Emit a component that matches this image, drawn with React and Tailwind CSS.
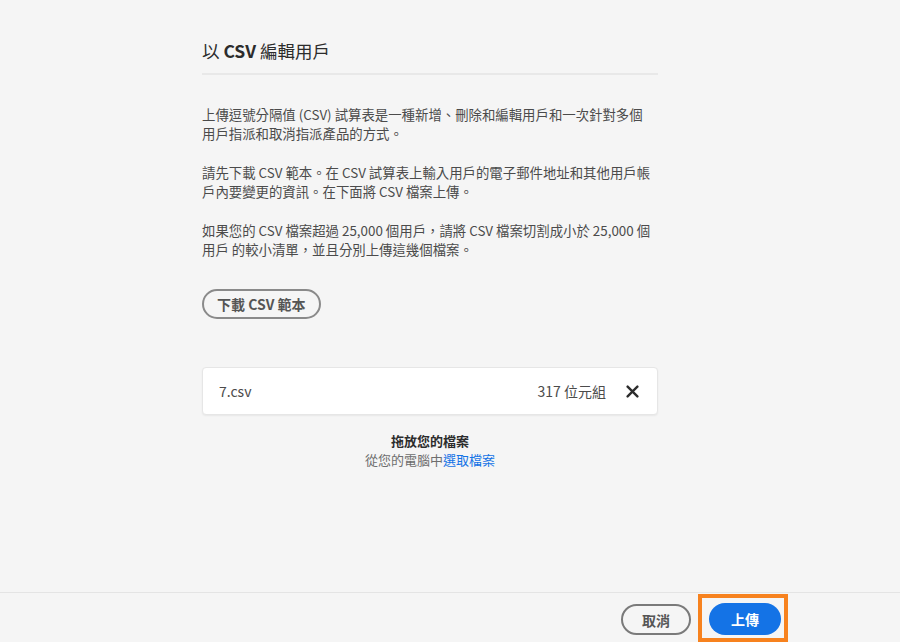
import React from 'react';

const font = { fontFamily: '"Noto Sans CJK TC", "Open Sans", sans-serif' };

const CloseIcon = () => (
  <svg width="13" height="13" viewBox="0 0 12 12" fill="none" stroke="#2c2c2c" strokeWidth="2.2" strokeLinecap="round">
    <path d="M1.5 1.5l9 9M10.5 1.5l-9 9" />
  </svg>
);

export default function App() {
  return (
    <div
      className="h-[642px] w-[900px] flex flex-col bg-[#f5f5f5] text-[#4b4b4b] font-['Noto_Sans_CJK_TC',_sans-serif]"
      style={font}
    >
      {/* Body */}
      <div className="flex-1 pl-[202px]">
        <div className="w-[456px]">
          <h2 className="pt-[39px] pb-[10px] text-[17.5px] leading-[24px] text-[#2c2c2c]">
            以 <span className="font-bold">CSV</span> 編輯用戶
          </h2>
          <div className="h-[2px] bg-[#e8e8e8]" />

          <div className="mt-[30px] space-y-[20px] text-[13.4px] leading-[19px] whitespace-nowrap">
            <p>
              上傳逗號分隔值 (CSV) 試算表是一種新增、刪除和編輯用戶和一次針對多個
              <br />
              用戶指派和取消指派產品的方式。
            </p>
            <p>
              請先下載 CSV 範本。在 CSV 試算表上輸入用戶的電子郵件地址和其他用戶帳
              <br />
              戶內要變更的資訊。在下面將 CSV 檔案上傳。
            </p>
            <p>
              如果您的 CSV 檔案超過 25,000 個用戶，請將 CSV 檔案切割成小於 25,000 個
              <br />
              用戶 的較小清單，並且分別上傳這幾個檔案。
            </p>
          </div>

          <button className="mt-[30px] h-[30px] px-[13px] rounded-full border-2 border-[#8a8a8a] text-[14px] font-bold text-[#555555] leading-none">
            下載 CSV 範本
          </button>

          {/* File card */}
          <div className="mt-[48px] h-[48px] flex items-center bg-white border border-[#e6e6e6] rounded-[4px] shadow-[0_1px_2px_rgba(0,0,0,0.06)] pl-[16px] pr-[18px] text-[14px]">
            <span className="flex-1">7.csv</span>
            <span className="mr-[20px]">317 位元組</span>
            <CloseIcon />
          </div>

          <div className="mt-[16px] text-center text-[13px] leading-[19px]">
            <div className="font-bold text-[#2c2c2c]">拖放您的檔案</div>
            <div className="text-[#6e6e6e]">
              從您的電腦中<span className="text-[#1473e6]">選取檔案</span>
            </div>
          </div>
        </div>
      </div>

      {/* Footer */}
      <div className="h-[50px] border-t border-[#e4e4e4] flex items-start justify-end pr-[112px] pt-[1px]">
        <button className="mt-[10px] h-[31px] w-[70px] rounded-full border-2 border-[#7a7a7a] text-[14px] font-bold text-[#555555] leading-none">
          取消
        </button>
        <div className="ml-[7px] w-[90px] h-[48px] border-4 border-[#f7821e] pl-[7px] pt-[5px]">
          <button className="h-[32px] w-[72px] rounded-full bg-[#1473e6] text-white text-[14px] font-bold leading-none">
            上傳
          </button>
        </div>
      </div>
    </div>
  );
}
